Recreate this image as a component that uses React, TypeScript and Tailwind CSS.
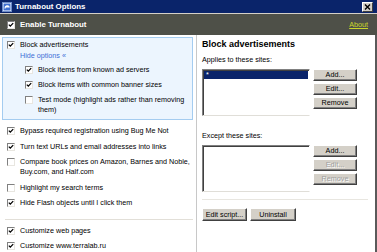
import React from 'react';

const Box = ({ on, className = '' }: { on: boolean; className?: string }) => (
  <span
    className={`relative inline-block w-[8px] h-[8px] shrink-0 bg-white border border-t-[#808080] border-l-[#808080] border-r-[#e8e6e0] border-b-[#e8e6e0] ${className}`}
  >
    {on && (
      <svg viewBox="0 0 6 6" className="absolute inset-0 w-full h-full">
        <path d="M0.8 2.6 L2.3 4.1 L5.2 1.1" stroke="#000" strokeWidth="1.3" fill="none" />
      </svg>
    )}
  </span>
);

const Row = ({ on, children, className = '' }: { on: boolean; children: React.ReactNode; className?: string }) => (
  <div className={`flex items-start gap-[5px] ${className}`}>
    <Box on={on} className="mt-[1px]" />
    <span className="leading-[10px] whitespace-nowrap">{children}</span>
  </div>
);

const Btn = ({ children, disabled, className = '' }: { children: React.ReactNode; disabled?: boolean; className?: string }) => (
  <div
    className={`h-[12px] flex items-center justify-center bg-[#d4d0c8] border border-t-white border-l-white border-r-[#404040] border-b-[#404040] shadow-[inset_-1px_-1px_0_#808080] leading-none ${
      disabled ? 'text-[#a0a0a0] [text-shadow:1px_1px_0_#fff]' : 'text-black'
    } ${className}`}
  >
    {children}
  </div>
);

const SiteList = ({ selected }: { selected?: boolean }) => (
  <div className="w-[108px] h-[47px] bg-white border border-t-[#808080] border-l-[#808080] border-r-white border-b-[#e0ded8] shadow-[inset_1px_1px_0_#404040] p-[1px]">
    {selected && (
      <div className="h-[8px] bg-[#0a246a] text-white leading-[8px] pl-[2px]">*</div>
    )}
  </div>
);

export default function App() {
  return (
    <div className="w-[377px] h-[252px] overflow-hidden bg-white text-[7.2px] text-black font-['Liberation_Sans',Arial,sans-serif] flex flex-col">
      {/* title bar */}
      <div className="h-[13px] bg-[#0a246a] flex items-center pl-[2px] pr-[4px] shrink-0">
        <svg viewBox="0 0 10 10" className="w-[10px] h-[10px]">
          <rect x="0.5" y="0.5" width="9" height="9" fill="#ffffff" stroke="#6d8cc8" />
          <rect x="1.5" y="1.5" width="7" height="7" fill="#3f6fd0" />
          <path d="M3 6.5 C3 3.5 6.5 3 7 5 L3.6 5" stroke="#fff" strokeWidth="1.2" fill="none" />
        </svg>
        <span className="ml-[3px] text-white font-bold text-[7.9px] leading-none">Turnabout Options</span>
        <div className="ml-auto w-[11px] h-[10px] bg-[#d4d0c8] border border-t-white border-l-white border-r-[#404040] border-b-[#404040] flex items-center justify-center">
          <svg viewBox="0 0 7 6" className="w-[7px] h-[6px]">
            <path d="M1 0.5 L6 5.5 M6 0.5 L1 5.5" stroke="#000" strokeWidth="1.4" />
          </svg>
        </div>
      </div>
      <div className="h-[1px] bg-[#d4d0c8] shrink-0" />

      {/* header band */}
      <div className="h-[21px] bg-[#4e5048] flex items-center pl-[7px] pr-[9px] shrink-0">
        <Box on className="border-[#404040]" />
        <span className="ml-[5px] text-white font-bold text-[7.9px] leading-none">Enable Turnabout</span>
        <a className="ml-auto text-[#cbd62a] underline leading-none">About</a>
      </div>

      {/* body */}
      <div className="flex flex-1 border-r-2 border-r-[#5a5a5a]">
        {/* left column */}
        <div className="w-[197px] shrink-0 border-r border-r-[#c8c8c8] pl-[2px] pr-[3px] pt-[2px]">
          <div className="bg-[#ecf5fe] border border-[#a4ccf0] pl-[4px] pt-[2px] pb-[4px]">
            <Row on>Block advertisements</Row>
            <div className="pl-[13px] mt-[1px] leading-[10px] text-[#3d6fd6]">Hide options «</div>
            <div className="pl-[18px] mt-[4px] flex flex-col gap-[5px]">
              <Row on>Block items from known ad servers</Row>
              <Row on>Block items with common banner sizes</Row>
              <Row on={false}>
                Test mode (highlight ads rather than removing
                <br />
                them)
              </Row>
            </div>
          </div>

          <div className="pl-[5px] mt-[6px] flex flex-col gap-[5.5px]">
            <Row on>Bypass required registration using Bug Me Not</Row>
            <Row on>Turn text URLs and email addresses into links</Row>
            <Row on={false}>
              Compare book prices on Amazon, Barnes and Noble,
              <br />
              Buy.com, and Half.com
            </Row>
            <Row on={false}>Highlight my search terms</Row>
            <Row on>Hide Flash objects until I click them</Row>
          </div>

          <div className="ml-[3px] mt-[11px] h-[1px] bg-[#e2dfd8]" />

          <div className="pl-[5px] mt-[6px] flex flex-col gap-[5px]">
            <Row on>Customize web pages</Row>
            <Row on>Customize www.terralab.ru</Row>
          </div>
        </div>

        {/* right column */}
        <div className="flex-1 pl-[5px] pr-[7px] pt-[3px]">
          <div className="font-bold text-[9px] leading-[12px]">Block advertisements</div>
          <div className="mt-[5px] leading-[10px]">Applies to these sites:</div>
          <div className="mt-[4px] flex gap-[3px]">
            <SiteList selected />
            <div className="w-[44px] flex flex-col gap-[2px]">
              <Btn>Add...</Btn>
              <Btn>Edit...</Btn>
              <Btn>Remove</Btn>
            </div>
          </div>

          <div className="mt-[15px] leading-[10px]">Except these sites:</div>
          <div className="mt-[4px] flex gap-[3px]">
            <SiteList />
            <div className="w-[44px] flex flex-col gap-[2px]">
              <Btn>Add...</Btn>
              <Btn disabled>Edit...</Btn>
              <Btn disabled>Remove</Btn>
            </div>
          </div>

          <div className="mt-[7px] h-[1px] bg-[#e8e6e0]" />

          <div className="mt-[8px] flex gap-[3px]">
            <Btn className="w-[45px] h-[13px]">Edit script...</Btn>
            <Btn className="w-[46px] h-[13px]">Uninstall</Btn>
          </div>
        </div>
      </div>
    </div>
  );
}
